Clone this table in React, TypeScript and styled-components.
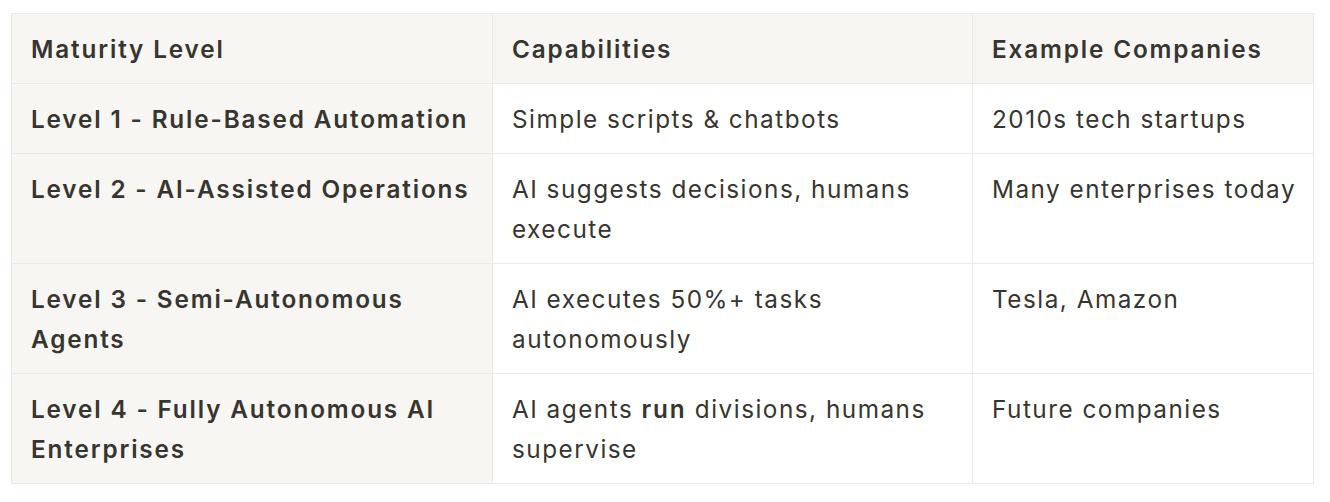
import React from "react";
import styled, { createGlobalStyle } from "styled-components";

const Global = createGlobalStyle`
  html, body { margin: 0; padding: 0; background: #ffffff; }
  body { font-family: Inter, "Noto Sans", sans-serif; color: #37352f; }
`;

const Page = styled.div`
  padding: 13px 17px 0 11px;
`;

const Table = styled.table`
  border-collapse: collapse;
  table-layout: fixed;
  width: 1302px;
  font-size: 24.3px;
  line-height: 40px;
`;

const Cell = styled.td<{ $head?: boolean; $shade?: boolean }>`
  border: 1px solid #e9e9e7;
  padding: 14.5px 14px 14.5px 19px;
  vertical-align: top;
  text-align: left;
  font-weight: ${(p) => (p.$head ? 600 : 400)};
  letter-spacing: ${(p) => (p.$head ? "1.85px" : "1.5px")};
  background: ${(p) => (p.$shade ? "#f7f6f3" : "#ffffff")};
  color: #37352f;
`;

const Strong = styled.strong`
  font-weight: 600;
  letter-spacing: 1.85px;
`;

type Row = { level: string; cap: React.ReactNode; ex: string };

const rows: Row[] = [
  { level: "Level 1 - Rule-Based Automation", cap: "Simple scripts & chatbots", ex: "2010s tech startups" },
  { level: "Level 2 - AI-Assisted Operations", cap: "AI suggests decisions, humans execute", ex: "Many enterprises today" },
  { level: "Level 3 - Semi-Autonomous Agents", cap: "AI executes 50%+ tasks autonomously", ex: "Tesla, Amazon" },
  {
    level: "Level 4 - Fully Autonomous AI Enterprises",
    cap: (
      <>
        AI agents <Strong>run</Strong> divisions, humans supervise
      </>
    ),
    ex: "Future companies",
  },
];

export default function App() {
  return (
    <Page>
      <Global />
      <Table>
        <colgroup>
          <col style={{ width: 481 }} />
          <col style={{ width: 480 }} />
          <col style={{ width: 341 }} />
        </colgroup>
        <thead>
          <tr>
            <Cell as="th" $head $shade>Maturity Level</Cell>
            <Cell as="th" $head $shade>Capabilities</Cell>
            <Cell as="th" $head $shade>Example Companies</Cell>
          </tr>
        </thead>
        <tbody>
          {rows.map((r) => (
            <tr key={r.level}>
              <Cell $head $shade>{r.level}</Cell>
              <Cell>{r.cap}</Cell>
              <Cell>{r.ex}</Cell>
            </tr>
          ))}
        </tbody>
      </Table>
    </Page>
  );
}
